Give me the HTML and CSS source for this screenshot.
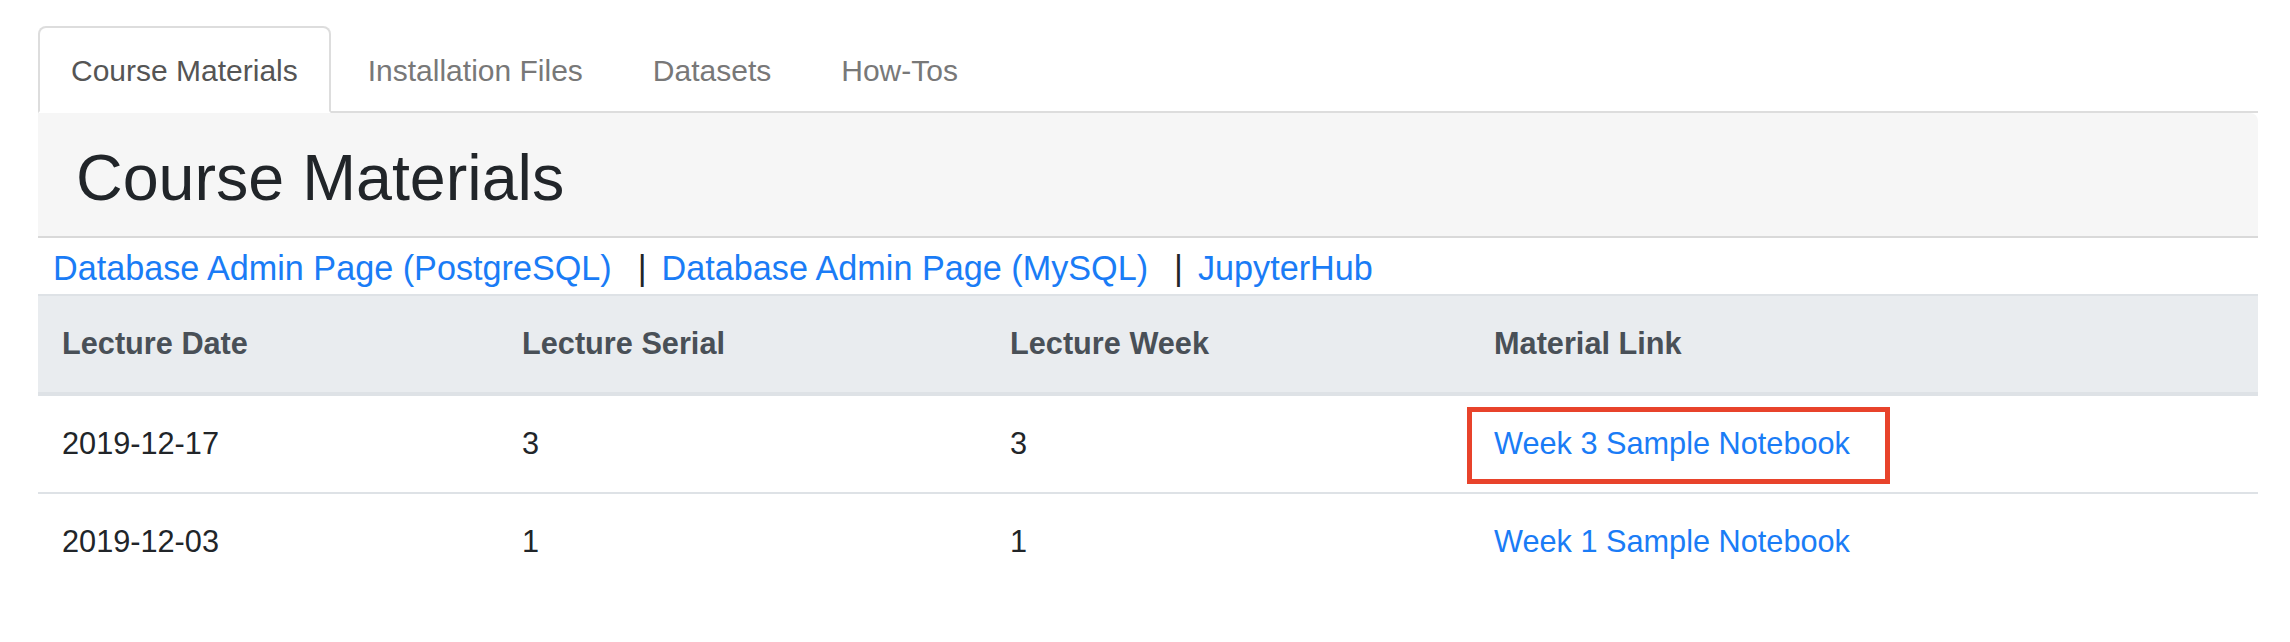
FILE: index.html
```html
<!DOCTYPE html>
<html lang="en">
<head>
<meta charset="utf-8">
<title>Course Materials</title>
<link rel="stylesheet" href="styles.css">
</head>
<body>
<div class="page">
  <nav class="tabs">
    <a class="tab active" href="#">Course Materials</a>
    <a class="tab" href="#">Installation Files</a>
    <a class="tab" href="#">Datasets</a>
    <a class="tab" href="#">How-Tos</a>
  </nav>
  <div class="panel">
    <h1 class="title">Course Materials</h1>
  </div>
  <div class="links">
    <a class="link" href="#">Database Admin Page (PostgreSQL)</a><span class="sep">|</span><a class="link" href="#">Database Admin Page (MySQL)</a><span class="sep">|</span><a class="link" href="#">JupyterHub</a>
  </div>
  <table class="lectures">
    <thead>
      <tr>
        <th class="c1">Lecture Date</th>
        <th class="c2">Lecture Serial</th>
        <th class="c3">Lecture Week</th>
        <th class="c4">Material Link</th>
      </tr>
    </thead>
    <tbody>
      <tr>
        <td>2019-12-17</td>
        <td>3</td>
        <td>3</td>
        <td class="link-cell"><a class="link" href="#">Week 3 Sample Notebook</a><span class="mark"></span></td>
      </tr>
      <tr>
        <td>2019-12-03</td>
        <td>1</td>
        <td>1</td>
        <td class="link-cell"><a class="link" href="#">Week 1 Sample Notebook</a></td>
      </tr>
    </tbody>
  </table>
</div>
</body>
</html>
```
FILE: styles.css
```css
html, body {
  margin: 0;
  padding: 0;
  background: #ffffff;
}
body {
  font-family: "Liberation Sans", Arial, sans-serif;
  color: #212529;
}
.page {
  padding: 26px 32px 0 38px;
}
.tabs {
  display: flex;
  gap: 4px;
  border-bottom: 2px solid #dddddd;
}
.tab {
  display: block;
  padding: 19px 31px 16px;
  border: 2px solid transparent;
  border-radius: 8px 8px 0 0;
  margin-bottom: -2px;
  font-size: 30px;
  line-height: 48px;
  color: #787878;
  text-decoration: none;
}
.tab.active {
  color: #555555;
  background: #ffffff;
  border-color: #dddddd #dddddd transparent;
}
.panel {
  background: #f6f6f6;
  border-bottom: 2px solid #d9d9d9;
  border-top-right-radius: 8px;
  padding: 27px 38px 19px;
}
.title {
  margin: 0;
  font-size: 64.6px;
  line-height: 76.8px;
  font-weight: normal;
  color: #212529;
}
.links {
  padding: 5px 0 1px 15px;
  font-size: 34.2px;
  line-height: 50px;
}
.link {
  color: #1a7cf6;
  text-decoration: none;
}
.sep {
  color: #212529;
  margin: 0 15px 0 26px;
}
.lectures {
  width: 100%;
  border-collapse: separate;
  border-spacing: 0;
  table-layout: fixed;
  font-size: 30.7px;
  line-height: 48px;
}
.lectures th {
  box-sizing: border-box;
  text-align: left;
  background: #e9ecef;
  color: #495057;
  font-weight: bold;
  padding: 24px;
  border-top: 2px solid #dee2e6;
  border-bottom: 4px solid #dee2e6;
}
.lectures .c1 { width: 460px; }
.lectures .c2 { width: 488px; }
.lectures .c3 { width: 484px; }
.lectures td {
  padding: 24px;
  color: #212529;
}
.lectures tbody tr + tr td {
  border-top: 2px solid #dee2e6;
}
.link-cell {
  position: relative;
}
.mark {
  position: absolute;
  left: -3px;
  top: 11px;
  width: 423px;
  height: 77px;
  box-sizing: border-box;
  border: 5px solid #e8432b;
}
```
